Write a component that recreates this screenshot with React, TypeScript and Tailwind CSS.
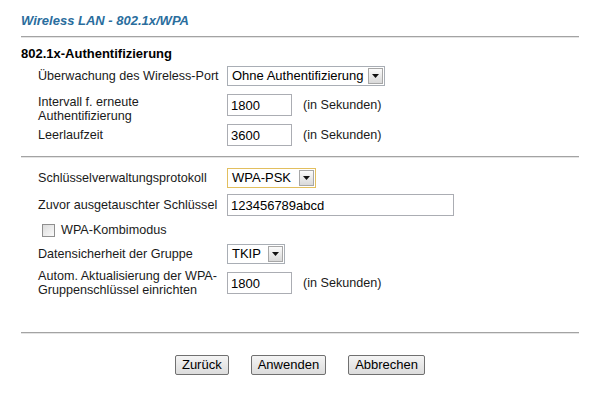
import { useState } from 'react';

const Arrow = () => (
  <span className="flex h-full w-[15px] shrink-0 items-center justify-center border border-[#a7a7a7] bg-gradient-to-b from-[#fbfbfb] to-[#d9d9d9]">
    <svg width="7" height="4" viewBox="0 0 7 4">
      <path d="M0 0H7L3.5 4Z" fill="#111" />
    </svg>
  </span>
);

const FakeSelect = ({ value, width, focused }: { value: string; width: string; focused?: boolean }) => (
  <div
    className={`flex h-[20px] items-stretch bg-white p-[1px] ${width} border ${
      focused ? 'border-[#e2bf5f]' : 'border-[#a9aeb5]'
    }`}
  >
    <span className="flex-1 pl-[3px] text-[13px] leading-[16px] text-black whitespace-nowrap">{value}</span>
    <Arrow />
  </div>
);

const TextBox = ({ value, width }: { value: string; width: string }) => (
  <input
    defaultValue={value}
    className={`h-[22px] ${width} border border-[#abadb3] bg-white px-[3px] text-[13px] text-black outline-none`}
  />
);

const Rule = () => (
  <div>
    <div className="h-[1px] bg-[#a3a3a3]" />
    <div className="h-[1px] bg-[#e4e4e4]" />
  </div>
);

const Button = ({ label }: { label: string }) => (
  <button className="h-[20px] rounded-[2px] border border-[#707070] bg-gradient-to-b from-[#f4f4f4] to-[#dcdcdc] px-[6px] text-[13px] leading-[16px] text-black">
    {label}
  </button>
);

export default function App() {
  const [combi, setCombi] = useState(false);

  return (
    <div className="h-[401px] w-[601px] overflow-hidden bg-white font-['Liberation_Sans',Arial,sans-serif] text-[12.6px] leading-[14px] text-[#1a1a1a]">
      <div className="ml-[21px] w-[558px] pt-[13px]">
        <h1 className="text-[13px] font-bold italic leading-[16px] text-[#2a6d9d]">Wireless LAN - 802.1x/WPA</h1>
        <div className="mt-[7px]">
          <Rule />
        </div>

        <h2 className="mt-[8px] text-[13px] font-bold leading-[16px] text-black">802.1x-Authentifizierung</h2>

        <div className="pl-[17px]">
          <div className="mt-[4px] flex items-center">
            <div className="w-[189px]">Überwachung des Wireless-Port</div>
            <FakeSelect value="Ohne Authentifizierung" width="w-[158px]" />
          </div>

          <div className="mt-[8px] flex items-start">
            <div className="mt-[1px] w-[189px]">
              Intervall f. erneute
              <br />
              Authentifizierung
            </div>
            <TextBox value="1800" width="w-[65px]" />
            <span className="ml-[11px] mt-[4px]">(in Sekunden)</span>
          </div>

          <div className="mt-[1px] flex items-center">
            <div className="w-[189px]">Leerlaufzeit</div>
            <TextBox value="3600" width="w-[65px]" />
            <span className="ml-[11px]">(in Sekunden)</span>
          </div>
        </div>

        <div className="mt-[10px]">
          <Rule />
        </div>

        <div className="pl-[17px]">
          <div className="mt-[10px] flex items-center">
            <div className="w-[189px]">Schlüsselverwaltungsprotokoll</div>
            <FakeSelect value="WPA-PSK" width="w-[89px]" focused />
          </div>

          <div className="mt-[6px] flex items-center">
            <div className="w-[189px]">Zuvor ausgetauschter Schlüssel</div>
            <TextBox value="123456789abcd" width="w-[227px]" />
          </div>

          <label className="mt-[7px] flex items-center pl-[4px]">
            <input
              type="checkbox"
              checked={combi}
              onChange={(e) => setCombi(e.target.checked)}
              className="m-0 h-[13px] w-[13px] appearance-none border border-[#8f8f8f] bg-gradient-to-br from-[#dcdcdc] to-[#fafafa]"
            />
            <span className="ml-[6px]">WPA-Kombimodus</span>
          </label>

          <div className="mt-[7px] flex items-center">
            <div className="w-[189px]">Datensicherheit der Gruppe</div>
            <FakeSelect value="TKIP" width="w-[58px]" />
          </div>

          <div className="mt-[5px] flex items-center">
            <div className="w-[189px]">
              Autom. Aktualisierung der WPA-
              <br />
              Gruppenschlüssel einrichten
            </div>
            <TextBox value="1800" width="w-[65px]" />
            <span className="ml-[11px]">(in Sekunden)</span>
          </div>
        </div>

        <div className="mt-[35px]">
          <Rule />
        </div>

        <div className="mt-[21px] flex justify-center gap-[22px]">
          <Button label="Zurück" />
          <Button label="Anwenden" />
          <Button label="Abbrechen" />
        </div>
      </div>
    </div>
  );
}
